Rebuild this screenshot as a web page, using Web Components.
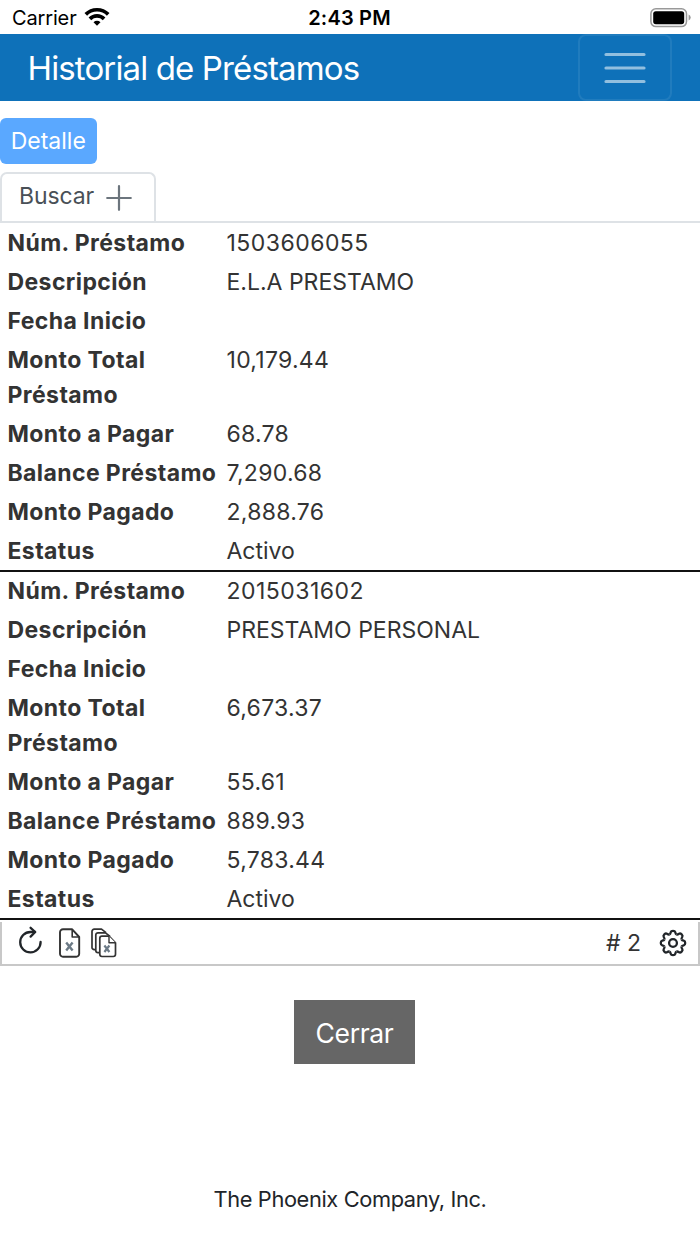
<!DOCTYPE html>
<html lang="es">
<head>
<meta charset="utf-8">
<meta name="viewport" content="width=device-width, initial-scale=1">
<title>Historial de Préstamos</title>
<style>
  body {
    margin: 0;
    background: #fff;
    color: #333;
    font-family: Inter, "Liberation Sans", sans-serif;
    font-size: 23px;
  }
</style>
</head>
<body>
<loan-app></loan-app>

<script>
class StatusBar extends HTMLElement {
  connectedCallback() {
    this.attachShadow({ mode: 'open' });
    this.shadowRoot.innerHTML = `
      <style>
        :host {
          display: grid;
          grid-template-columns: 1fr auto 1fr;
          align-items: center;
          box-sizing: border-box;
          height: 34px;
          padding: 1px 9px 0 12px;
          color: #000;
          font-size: 20px;
          line-height: 24px;
        }
        .carrier {
          display: flex;
          align-items: center;
          gap: 7px;
          letter-spacing: -0.15px;
        }
        .carrier svg { margin-top: -2px; }
        .time {
          margin-right: 4px;
          font-weight: 600;
          letter-spacing: 0.2px;
        }
        svg { display: block; }
        .battery { justify-self: end; }
      </style>
      <div class="carrier">
        <span>Carrier</span>
        <svg width="26" height="20" viewBox="0 0 26 20">
          <g fill="none" stroke="#000" stroke-width="3.7">
            <path d="M1.8 7.4a15.8 15.8 0 0 1 22.4 0"/>
            <path d="M5.9 11.9a10 10 0 0 1 14.2 0"/>
          </g>
          <path d="M13 18.8l-3.5-3.5a5 5 0 0 1 7 0z"/>
        </svg>
      </div>
      <span class="time">2:43 PM</span>
      <svg class="battery" width="41" height="20" viewBox="0 0 41 20">
        <rect x="0.9" y="0.8" width="35.6" height="17.8" rx="5" fill="none" stroke="#999" stroke-width="1.5"/>
        <rect x="3.2" y="3.2" width="31" height="13" rx="2.6" fill="#000"/>
        <path d="M38.6 6.6q2.1 1 2.1 3t-2.1 3z" fill="#999"/>
      </svg>
    `;
  }
}

class AppHeader extends HTMLElement {
  connectedCallback() {
    this.attachShadow({ mode: 'open' });
    this.shadowRoot.innerHTML = `
      <style>
        :host {
          display: flex;
          justify-content: space-between;
          align-items: stretch;
          box-sizing: border-box;
          height: 67px;
          padding: 0 28px 0 27.5px;
          background: #0e71b9;
          color: #fff;
          font-size: 33px;
          line-height: 68px;
          letter-spacing: -0.87px;
        }
        button {
          display: flex;
          align-items: center;
          justify-content: center;
          box-sizing: border-box;
          width: 94px;
          padding: 0;
          background: none;
          border: 2px solid rgba(255, 255, 255, 0.08);
          border-radius: 8px;
        }
      </style>
      <slot></slot>
      <button aria-label="Menu">
        <svg width="42" height="34" viewBox="0 0 42 34" stroke="#fff" stroke-opacity="0.55" stroke-width="3.2" stroke-linecap="round">
          <path d="M2 3.5h38M2 17h38M2 30.5h38"/>
        </svg>
      </button>
    `;
  }
}

class SearchTabs extends HTMLElement {
  connectedCallback() {
    this.attachShadow({ mode: 'open' });
    this.shadowRoot.innerHTML = `
      <style>
        :host {
          display: flex;
          border-bottom: 2px solid #dee2e6;
        }
        .tab {
          display: flex;
          align-items: center;
          gap: 12px;
          box-sizing: border-box;
          width: 156px;
          height: 49px;
          padding: 0 0 3px 17px;
          border: 2px solid #dee2e6;
          border-bottom: 0;
          border-radius: 7px 7px 0 0;
          color: #495057;
          line-height: 44px;
          letter-spacing: -0.1px;
        }
        svg { display: block; margin-top: 4px; }
      </style>
      <div class="tab">
        <slot></slot>
        <svg width="26" height="26" viewBox="0 0 26 26" stroke="#6c757d" stroke-width="2.2" stroke-linecap="round">
          <path d="M1.2 13h23.6M13 1.2v23.6"/>
        </svg>
      </div>
    `;
  }
}

class LoanRecord extends HTMLElement {
  connectedCallback() {
    this.attachShadow({ mode: 'open' });
    this.shadowRoot.innerHTML = `
      <style>
        :host {
          display: block;
          box-sizing: border-box;
          height: 348px;
          padding-top: 0.3px;
          border-bottom: 2px solid #111;
        }
      </style>
      <slot></slot>
    `;
  }
}

class LoanField extends HTMLElement {
  connectedCallback() {
    // long loan numbers are spaced a bit wider than amounts
    const value = this.textContent;
    const spacing = /^\d{10}$/.test(value) ? 0.47 : /^\d/.test(value) ? 0.28 : 0;

    this.attachShadow({ mode: 'open' });
    this.shadowRoot.innerHTML = `
      <style>
        :host {
          display: grid;
          grid-template-columns: 211px 1fr;
          gap: 8px;
          padding: 1.65px 7.5px;
          line-height: 35.6px;
        }
        b {
          font-weight: 700;
          letter-spacing: 0.4px;
        }
        span { letter-spacing: ${spacing}px; }
      </style>
      <b>${this.getAttribute('label')}</b>
      <span><slot></slot></span>
    `;
  }
}

class GridToolbar extends HTMLElement {
  connectedCallback() {
    const tooth = '<path d="M-3.56-8.59C-2.6-9-2.5-9.7-2.2-11Q-1.9-12.2 0-12.2T2.2-11C2.5-9.7 2.6-9 3.56-8.59"/>';
    const teeth = [0, 45, 90, 135, 180, 225, 270, 315]
      .map(a => `<g transform="rotate(${a})">${tooth}</g>`).join('');

    this.attachShadow({ mode: 'open' });
    this.shadowRoot.innerHTML = `
      <style>
        :host {
          display: flex;
          align-items: center;
          box-sizing: border-box;
          height: 44px;
          margin-top: 2px;
          padding: 0 11px 0 16px;
          border: 2px solid #c8c8c8;
          border-top: 0;
        }
        svg { display: block; }
        .refresh { margin: -3px 15px 0 0; }
        .sheet { margin: 0 10px 0 1px; }
        .count { margin: 0 18px 0 auto; line-height: 36px; }
      </style>
      <svg class="refresh" width="25" height="30" viewBox="0 0 25 30" fill="none" stroke="#212529" stroke-width="2.3" stroke-linecap="round" stroke-linejoin="round">
        <path d="M22.6 16A10.2 10.2 0 1 1 12.4 6H17"/>
        <path d="M12.6 1.8L17.2 6l-4.6 4.6"/>
      </svg>
      <svg class="sheet" width="22" height="30" viewBox="0 0 22 30" fill="none" stroke="#333" stroke-width="1.9" stroke-linejoin="round">
        <path d="M4 1.3h9.2L20.2 9v16.7a3 3 0 0 1-3 3H4a3 3 0 0 1-3-3V4.3a3 3 0 0 1 3-3z"/>
        <path d="M13.2 1.5V9h7" stroke-width="1.6"/>
        <path d="M7.2 14.5l6.4 8M13.6 14.5l-6.4 8" stroke="#6c7a86" stroke-width="2.4"/>
      </svg>
      <svg width="26" height="30" viewBox="0 0 26 30" fill="#fff" stroke="#333" stroke-width="1.7" stroke-linejoin="round">
        <path d="M6.2 21.6h-3A2.2 2.2 0 0 1 1 19.4v-16a2.2 2.2 0 0 1 2.2-2.2h7.3l4.5 3.5"/>
        <path d="M10 24.7H7a2.2 2.2 0 0 1-2.2-2.2V7A2.2 2.2 0 0 1 7 4.8h7.5L19 8.3"/>
        <path d="M18 8.2h-7a2.2 2.2 0 0 0-2.2 2.2v15.9a2.2 2.2 0 0 0 2.2 2.2h11.3a2.2 2.2 0 0 0 2.2-2.2V14.8z"/>
        <path d="M18 8.2v6.6h6.5" stroke-width="1.4"/>
        <path d="M13.4 17.5l5 6.5M18.4 17.5l-5 6.5" stroke="#6c7a86" stroke-width="2.2"/>
      </svg>
      <span class="count"># <slot></slot></span>
      <svg width="28" height="28" viewBox="-14 -14 28 28" fill="none" stroke="#212529" stroke-width="2.3">
        ${teeth}
        <circle r="3.9"/>
      </svg>
    `;
  }
}

class AppButton extends HTMLElement {
  connectedCallback() {
    this.attachShadow({ mode: 'open' });
    this.shadowRoot.innerHTML = `
      <style>
        :host { display: block; }
        button {
          display: block;
          box-sizing: border-box;
          border: 0;
          padding: 0;
          color: #fff;
          font: inherit;
        }
        .primary {
          width: 96.5px;
          height: 45.5px;
          border-radius: 6px;
          background: #5aa8ff;
        }
        .close {
          width: 121px;
          height: 64px;
          padding-top: 2px;
          background: #666;
          font-size: 26.5px;
          letter-spacing: -0.35px;
        }
      </style>
      <button class="${this.getAttribute('variant')}"><slot></slot></button>
    `;
  }
}

class LoanApp extends HTMLElement {
  connectedCallback() {
    const loans = [
      ['1503606055', 'E.L.A PRESTAMO', '', '10,179.44', '68.78', '7,290.68', '2,888.76', 'Activo'],
      ['2015031602', 'PRESTAMO PERSONAL', '', '6,673.37', '55.61', '889.93', '5,783.44', 'Activo']
    ];
    const labels = ['Núm. Préstamo', 'Descripción', 'Fecha Inicio', 'Monto Total Préstamo',
      'Monto a Pagar', 'Balance Préstamo', 'Monto Pagado', 'Estatus'];

    this.attachShadow({ mode: 'open' });
    this.shadowRoot.innerHTML = `
      <style>
        :host { display: block; }
        .detail { margin: 17.4px 0 8.5px; }
        search-tabs { margin-bottom: 0.6px; }
        .close {
          width: 121px;
          margin: 34px 0 0 294px;
        }
        footer {
          margin-top: 117px;
          color: #212529;
          font-size: 21.8px;
          line-height: 36px;
          letter-spacing: -0.37px;
          text-align: center;
        }
      </style>
      <status-bar></status-bar>
      <app-header>Historial de Préstamos</app-header>
      <app-button class="detail" variant="primary">Detalle</app-button>
      <search-tabs>Buscar</search-tabs>
      ${loans.map(loan => `
        <loan-record>
          ${labels.map((label, i) => `<loan-field label="${label}">${loan[i]}</loan-field>`).join('')}
        </loan-record>
      `).join('')}
      <grid-toolbar>${loans.length}</grid-toolbar>
      <app-button class="close" variant="close">Cerrar</app-button>
      <footer>The Phoenix Company, Inc.</footer>
    `;
  }
}

customElements.define('status-bar', StatusBar);
customElements.define('app-header', AppHeader);
customElements.define('search-tabs', SearchTabs);
customElements.define('loan-record', LoanRecord);
customElements.define('loan-field', LoanField);
customElements.define('grid-toolbar', GridToolbar);
customElements.define('app-button', AppButton);
customElements.define('loan-app', LoanApp);
</script>
</body>
</html>
